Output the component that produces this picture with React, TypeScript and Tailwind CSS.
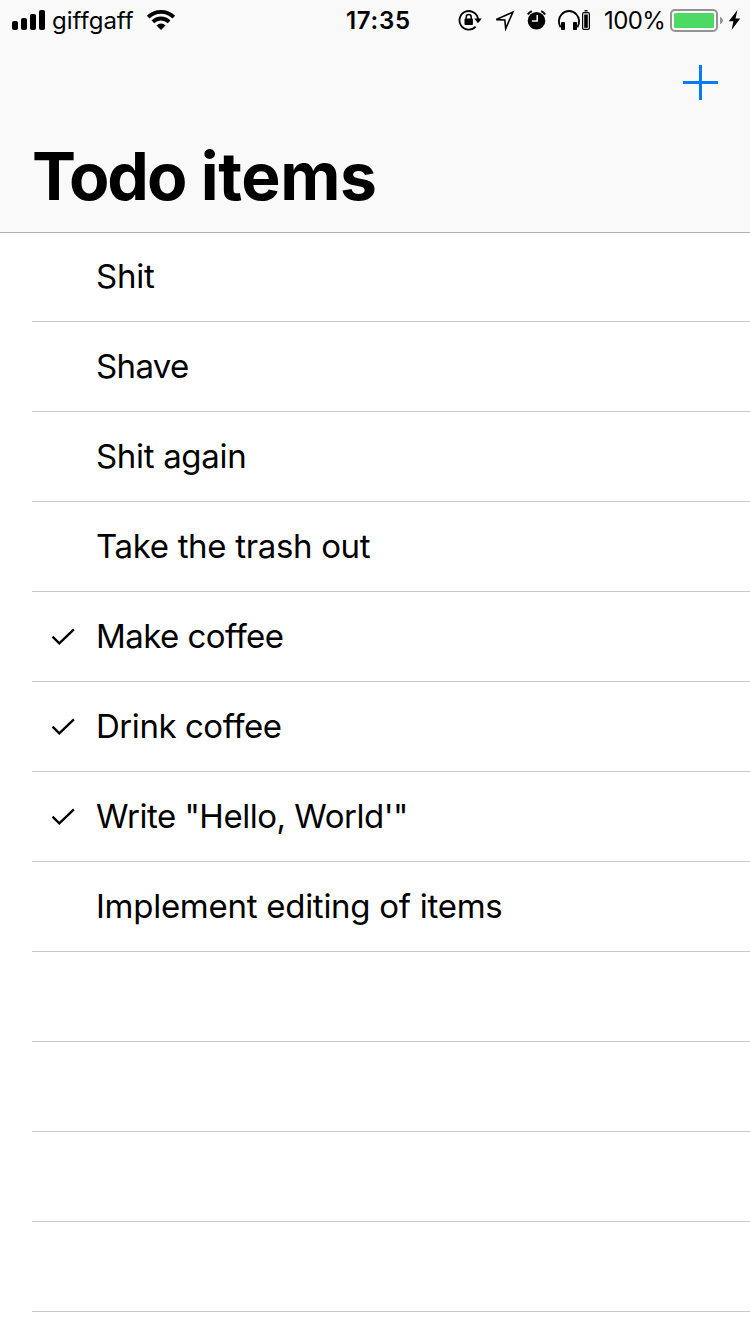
const items = [
  { text: 'Shit', done: false, spacing: 'tracking-[-0.2px]' },
  { text: 'Shave', done: false, spacing: 'tracking-[-0.65px]' },
  { text: 'Shit again', done: false, spacing: 'tracking-[-0.32px]' },
  { text: 'Take the trash out', done: false, spacing: 'tracking-[-0.33px]' },
  { text: 'Make coffee', done: true, spacing: 'tracking-[-0.55px]' },
  { text: 'Drink coffee', done: true, spacing: 'tracking-[-0.45px]' },
  { text: 'Write "Hello, World\'"', done: true, spacing: 'tracking-[-0.48px]' },
  { text: 'Implement editing of items', done: false, spacing: 'tracking-[-0.27px]' },
  { text: '', done: false, spacing: '' },
  { text: '', done: false, spacing: '' },
  { text: '', done: false, spacing: '' },
  { text: '', done: false, spacing: '' },
];

function SignalIcons() {
  return (
    <svg className="h-10 w-[52px] shrink-0" viewBox="0 0 52 40">
      <rect x="12" y="21" width="6" height="9" rx="2" />
      <rect x="21" y="18" width="6" height="12" rx="2" />
      <rect x="30" y="14" width="6" height="16" rx="2" />
      <rect x="39" y="10" width="6" height="20" rx="2" />
    </svg>
  );
}

function WifiIcon() {
  return (
    <svg className="h-10 w-[30px] shrink-0" viewBox="146 0 30 40">
      <g fill="none" stroke="#000" strokeWidth="3.9">
        <path d="M148.2 17.1a18.2 18.2 0 0 1 25.6 0" />
        <path d="M152.9 21.9a11.5 11.5 0 0 1 16.2 0" />
      </g>
      <path d="M161 30l-4.6-4.6a6.6 6.6 0 0 1 9.2 0z" />
    </svg>
  );
}

function StatusIcons() {
  return (
    <svg className="h-10 w-[146px] shrink-0" viewBox="458 0 146 40">
      <g>
        <path d="M475.6 26.7a9.3 9.3 0 1 1 2.5-6.7" fill="none" stroke="#000" strokeWidth="1.8" />
        <path d="M474.2 18.6h7.6l-3.8 4.6z" />
        <rect x="464.5" y="18.6" width="8.4" height="6.4" rx="0.8" />
        <path d="M466.2 19v-2a2.5 2.5 0 0 1 5 0v2" fill="none" stroke="#000" strokeWidth="1.5" />
      </g>
      <path
        d="M496.3 19.6l16.6-7.5-7.2 16.5-.9-8.6z"
        fill="none"
        stroke="#000"
        strokeWidth="1.6"
        strokeLinejoin="miter"
      />
      <g>
        <circle cx="536.5" cy="20.7" r="8.8" />
        <path d="M527.8 14.5a11 11 0 0 1 4-3.3M545.2 14.5a11 11 0 0 0-4-3.3" fill="none" stroke="#000" strokeWidth="2" />
        <path d="M537.2 15v6h-5.3" fill="none" stroke="#f9f9f9" strokeWidth="1.5" />
      </g>
      <g>
        <path d="M560.6 27.3c-2.6-4-2.2-9.8 1-13 4-4.4 10.8-4.4 14.8 0 3.2 3.2 3.6 9 1 13" fill="none" stroke="#000" strokeWidth="1.8" />
        <rect x="561" y="22" width="4" height="8" rx="0.8" />
        <rect x="573" y="22" width="4" height="8" rx="0.8" />
      </g>
      <g>
        <rect x="582.6" y="12.6" width="6.8" height="16.8" rx="1.4" fill="none" stroke="#000" strokeWidth="1.2" />
        <rect x="584.2" y="14.5" width="3.6" height="13.3" />
        <rect x="584.3" y="10" width="3.4" height="1.5" rx="0.7" />
      </g>
    </svg>
  );
}

function BatteryIcons() {
  return (
    <svg className="h-10 w-[82px] shrink-0" viewBox="668 0 82 40">
      <rect x="671" y="10" width="46" height="21" rx="4" fill="#fff" stroke="#939393" strokeWidth="2" />
      <rect x="674" y="13" width="40" height="15" rx="1.5" fill="#4cd964" />
      <path d="M720 16.7c1.9 1 2.9 2.2 2.9 3.8s-1 2.8-2.9 3.8z" fill="#939393" />
      <path d="M737.4 10l-8.6 11.3h4.6L731.6 30l8.6-11.6h-4.7z" />
    </svg>
  );
}

function CheckIcon() {
  return (
    <svg className="h-5 w-6" viewBox="0 0 24 20" fill="none" stroke="#000" strokeWidth="2.4">
      <path d="M1.5 9.7l6.8 6.6L22.9 2.4" />
    </svg>
  );
}

export default function App() {
  return (
    <div className="flex h-[1334px] w-[750px] flex-col overflow-hidden bg-white font-['Inter','Liberation_Sans',sans-serif] text-black">
      <header className="flex h-[233px] shrink-0 flex-col border-b border-[#b2b2b2] bg-[#f9f9f9]">
        <div className="flex h-10 items-center whitespace-nowrap text-2xl leading-10">
          <SignalIcons />
          <span className="w-[94px] pt-0.5">giffgaff</span>
          <WifiIcon />
          <span className="ml-[170px] w-[112px] pt-0.5 font-semibold tracking-[0.7px]">17:35</span>
          <StatusIcons />
          <span className="w-16 pt-0.5 tracking-[-0.6px]">100%</span>
          <BatteryIcons />
        </div>
        <div className="flex h-[84px] items-center justify-end pr-8">
          <button className="flex" aria-label="Add item">
            <svg className="size-[35px]" viewBox="0 0 35 35" fill="#007aff">
              <path d="M16 0h3v16h16v3H19v16h-3V19H0v-3h16z" />
            </svg>
          </button>
        </div>
        <h1 className="pl-8 text-[66px] font-bold leading-[104px] tracking-[-0.4px]">
          <span className="tracking-[-2px]">Todo</span> items
        </h1>
      </header>
      <ul className="flex flex-col pl-8">
        {items.map((item, i) => (
          <li key={i} className="flex h-[90px] shrink-0 items-center border-b border-[#c8c7cc] first:h-[89px]">
            <div className="flex w-16 justify-start pl-[19px]">{item.done && <CheckIcon />}</div>
            <span className={'whitespace-nowrap pb-0.5 text-[33px] leading-[44px] ' + item.spacing}>{item.text}</span>
          </li>
        ))}
      </ul>
    </div>
  );
}
